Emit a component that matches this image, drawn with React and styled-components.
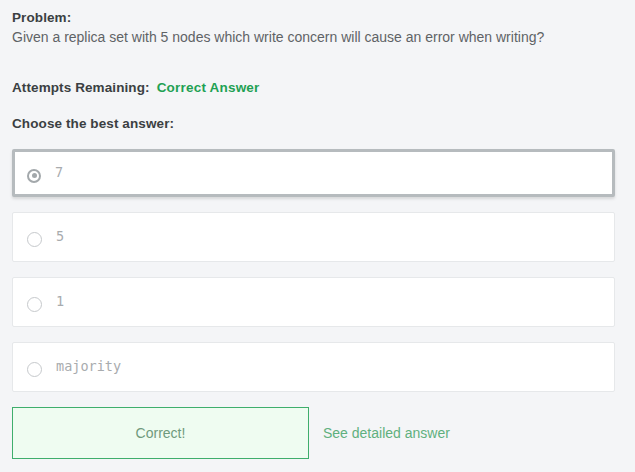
import styled, { createGlobalStyle } from "styled-components";

const GlobalStyle = createGlobalStyle`
  html, body {
    margin: 0;
    padding: 0;
    background: #f4f5f7;
  }
`;

const options = ["7", "5", "1", "majority"];

function Radio({ checked }) {
  return (
    <RadioCircle $checked={checked}>
      {checked && <RadioDot />}
    </RadioCircle>
  );
}

export default function App() {
  return (
    <>
      <GlobalStyle />
      <Page>
        <Section>
          <Heading>Problem:</Heading>
          <Body>
            Given a replica set with 5 nodes which write concern will cause an
            error when writing?
          </Body>
        </Section>
        <Attempts>
          <Heading>Attempts Remaining:</Heading>
          <Status>Correct Answer</Status>
        </Attempts>
        <Heading>Choose the best answer:</Heading>
        <OptionList>
          {options.map((opt, i) => (
            <Option key={opt} $selected={i === 0}>
              <Radio checked={i === 0} />
              <OptionText>{opt}</OptionText>
            </Option>
          ))}
        </OptionList>
        <Footer>
          <ResultBox>Correct!</ResultBox>
          <DetailLink>See detailed answer</DetailLink>
        </Footer>
      </Page>
    </>
  );
}

const Page = styled.div`
  width: 635px;
  height: 472px;
  box-sizing: border-box;
  padding: 9px 20px 0 12px;
  font-family: "Liberation Sans", Arial, sans-serif;
  color: #3d4144;
  display: flex;
  flex-direction: column;
`;

const Section = styled.div`
  display: flex;
  flex-direction: column;
  gap: 3px;
`;

const Heading = styled.div`
  font-size: 13.5px;
  line-height: 17px;
  font-weight: 700;
  color: #3b3f42;
  letter-spacing: 0.1px;
`;

const Body = styled.div`
  font-size: 14px;
  line-height: 17px;
  color: #5f6366;
`;

const Attempts = styled.div`
  display: flex;
  gap: 7px;
  margin-top: 33px;
  margin-bottom: 19px;
`;

const Status = styled.div`
  font-size: 13.5px;
  line-height: 17px;
  font-weight: 700;
  color: #1fa153;
  letter-spacing: 0.2px;
`;

const OptionList = styled.div`
  display: flex;
  flex-direction: column;
  gap: 15px;
  margin-top: 17px;
`;

const Option = styled.div`
  height: ${({ $selected }) => ($selected ? "48px" : "50px")};
  box-sizing: border-box;
  background: #ffffff;
  border: ${({ $selected }) => ($selected ? "3px solid #b6bbbe" : "1px solid #e6e8ea")};
  border-radius: 2px;
  box-shadow: ${({ $selected }) => ($selected ? "0 2px 3px rgba(0,0,0,0.12)" : "none")};
  display: flex;
  align-items: center;
  padding-left: ${({ $selected }) => ($selected ? "12px" : "14px")};
  padding-bottom: 2px;
`;

const RadioCircle = styled.div`
  width: ${({ $checked }) => ($checked ? "10px" : "13px")};
  height: ${({ $checked }) => ($checked ? "10px" : "13px")};
  border-radius: 50%;
  border: ${({ $checked }) => ($checked ? "2.5px solid #a3a8ab" : "1px solid #c6c9cc")};
  display: flex;
  align-items: center;
  justify-content: center;
  margin-top: 7px;
  flex-shrink: 0;
`;

const RadioDot = styled.div`
  width: 5px;
  height: 5px;
  border-radius: 50%;
  background: #a3a8ab;
`;

const OptionText = styled.div`
  font-family: "DejaVu Sans Mono", "Liberation Mono", monospace;
  font-size: 13.5px;
  color: #a8abae;
  margin-left: 14px;
  margin-top: -1px;
`;

const Footer = styled.div`
  display: flex;
  align-items: center;
  gap: 14px;
  margin-top: 15px;
`;

const ResultBox = styled.div`
  width: 297px;
  height: 52px;
  box-sizing: border-box;
  border: 1px solid #3fae6c;
  background: #effcf1;
  display: flex;
  align-items: center;
  justify-content: center;
  font-size: 14px;
  color: #6f9a7d;
`;

const DetailLink = styled.div`
  font-size: 14px;
  color: #5fb07e;
`;
